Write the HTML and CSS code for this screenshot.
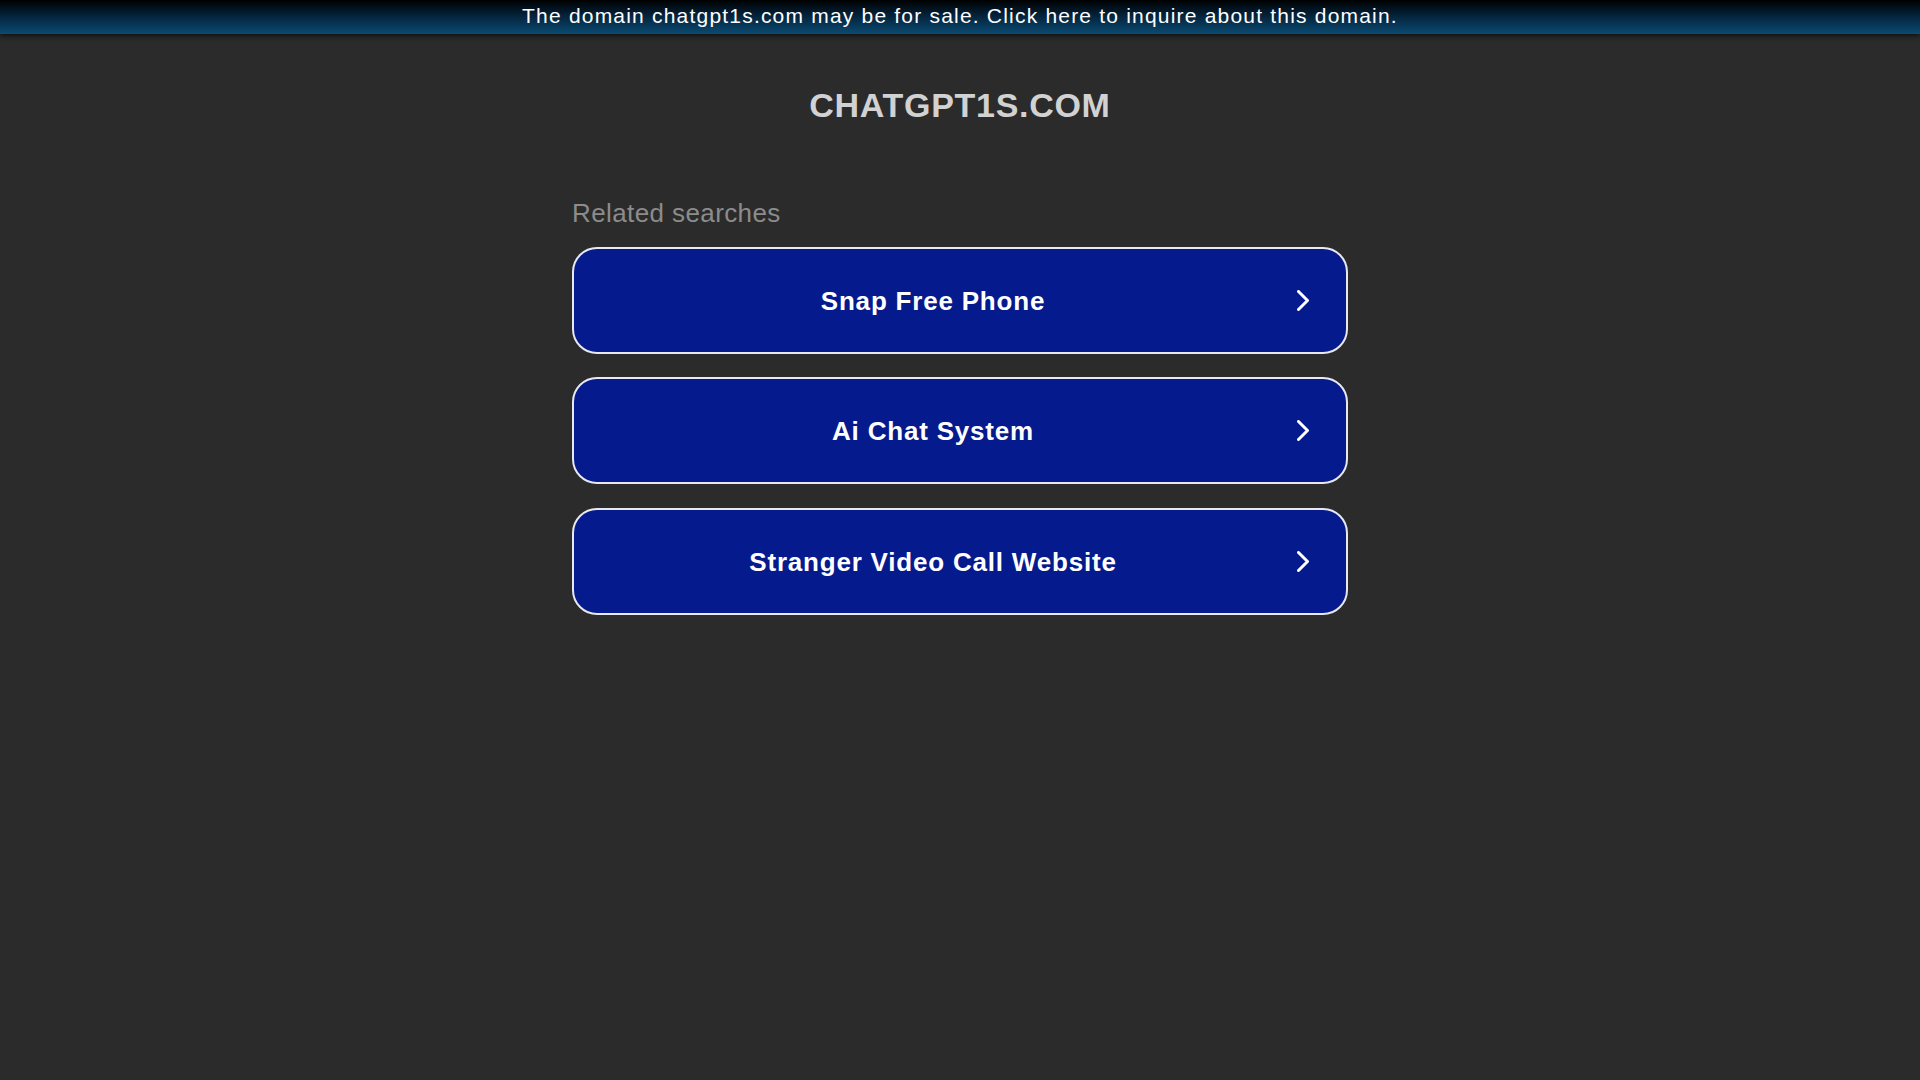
FILE: index.html
```html
<!DOCTYPE html>
<html lang="en">
<head>
<meta charset="utf-8">
<title>chatgpt1s.com</title>
<link rel="stylesheet" href="styles.css">
</head>
<body>
<div class="topbar"><a class="topbar-link" href="#">The domain chatgpt1s.com may be for sale. Click here to inquire about this domain.</a></div>
<main class="content">
  <h1 class="domain">CHATGPT1S.COM</h1>
  <section class="searches">
    <div class="searches-title">Related searches</div>
    <a class="search-btn" href="#"><span class="search-text">Snap Free Phone</span><svg class="chev" viewBox="0 0 12 21" width="12" height="21"><polyline points="1.5,1.5 10.5,10.5 1.5,19.5" fill="none" stroke="#fff" stroke-width="3" stroke-linecap="round" stroke-linejoin="round"/></svg></a>
    <a class="search-btn" href="#"><span class="search-text">Ai Chat System</span><svg class="chev" viewBox="0 0 12 21" width="12" height="21"><polyline points="1.5,1.5 10.5,10.5 1.5,19.5" fill="none" stroke="#fff" stroke-width="3" stroke-linecap="round" stroke-linejoin="round"/></svg></a>
    <a class="search-btn" href="#"><span class="search-text">Stranger Video Call Website</span><svg class="chev" viewBox="0 0 12 21" width="12" height="21"><polyline points="1.5,1.5 10.5,10.5 1.5,19.5" fill="none" stroke="#fff" stroke-width="3" stroke-linecap="round" stroke-linejoin="round"/></svg></a>
  </section>
</main>
</body>
</html>
```
FILE: styles.css
```css
html, body {
  margin: 0;
  padding: 0;
  background: #2b2b2b;
  font-family: "Liberation Sans", Arial, sans-serif;
  height: 100%;
}
.topbar {
  height: 34px;
  background: linear-gradient(to bottom, #000000 0%, #04223a 45%, #0b4a72 100%);
  box-shadow: 0 2px 5px rgba(0, 0, 0, 0.65);
  text-align: center;
  position: relative;
  z-index: 1;
}
.topbar-link {
  color: #ffffff;
  text-decoration: none;
  font-size: 21px;
  letter-spacing: 1.2px;
  line-height: 32px;
}
.content {
  width: 776px;
  margin: 0 auto;
}
.domain {
  margin: 51px 0 0;
  text-align: center;
  color: #d2d2d2;
  font-size: 34px;
  line-height: 40px;
  font-weight: bold;
  letter-spacing: 0.7px;
}
.searches {
  margin-top: 73px;
  display: flex;
  flex-direction: column;
  gap: 23.5px;
}
.searches-title {
  color: #8c8c8c;
  font-size: 26px;
  line-height: 30px;
  letter-spacing: 0.4px;
  margin-bottom: -5px;
}
.search-btn {
  box-sizing: border-box;
  height: 107px;
  border: 2px solid #e8e8f0;
  border-radius: 25px;
  background: #051a8c;
  display: flex;
  align-items: center;
  text-decoration: none;
  color: #ffffff;
}
.search-text {
  flex: 1;
  text-align: center;
  font-size: 26px;
  line-height: 30px;
  letter-spacing: 0.8px;
  font-weight: bold;
  padding-top: 1px;
}
.chev {
  flex: none;
  margin: 0 37px 0 5px;
}
```
